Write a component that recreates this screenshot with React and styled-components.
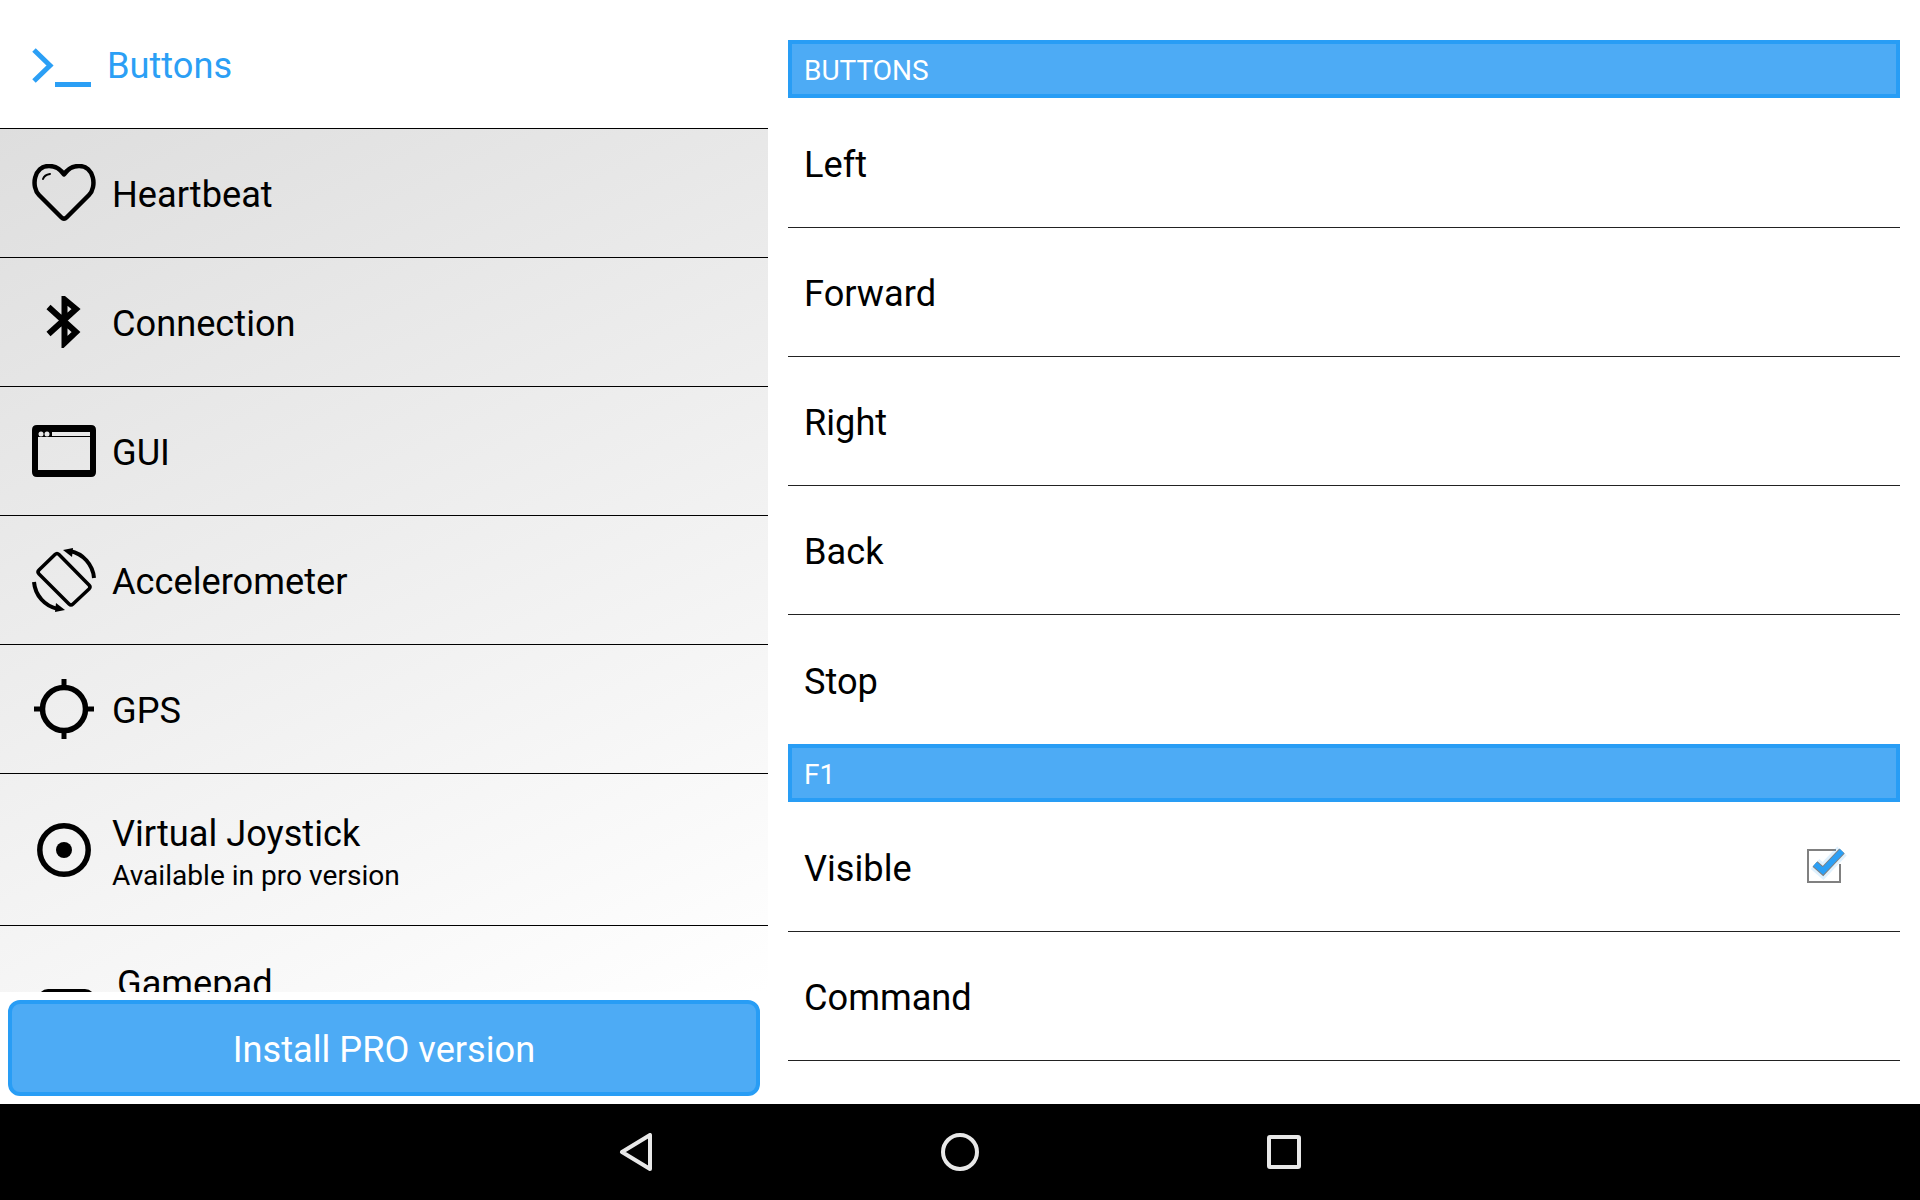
import React from "react";
import styled, { createGlobalStyle } from "styled-components";

const GlobalStyle = createGlobalStyle`
  html, body {
    margin: 0;
    padding: 0;
    background: #fff;
    font-family: Roboto, "Liberation Sans", sans-serif;
  }
`;

const Screen = styled.div`
  width: 1920px;
  height: 1200px;
  display: flex;
  flex-direction: column;
  overflow: hidden;
`;

const Content = styled.div`
  height: 1104px;
  display: flex;
`;

const Sidebar = styled.div`
  width: 768px;
  display: flex;
  flex-direction: column;
`;

const SideHeader = styled.div`
  height: 129px;
  box-sizing: border-box;
  display: flex;
  align-items: center;
  padding-left: 32px;
  border-bottom: 1px solid #000;
  flex-shrink: 0;
`;

const PromptSlot = styled.div`
  display: flex;
  margin-top: 8px;
`;

const SideTitle = styled.span`
  margin-left: 15px;
  padding-top: 3px;
  font-size: 36.2px;
  color: #2b9ff5;
`;

const MenuList = styled.div`
  height: 863px;
  overflow: hidden;
  flex-shrink: 0;
  background: linear-gradient(155deg, #dedede 0%, #ffffff 100%);
`;

const MenuItem = styled.div`
  height: ${(props) => (props.$tall ? "152px" : "129px")};
  box-sizing: border-box;
  display: flex;
  align-items: center;
  padding-left: 32px;
  border-bottom: 1px solid #000;
  color: #000;
`;

const IconSlot = styled.div`
  width: 64px;
  height: 64px;
  flex-shrink: 0;
  display: flex;
  align-items: center;
  justify-content: center;
`;

const MenuText = styled.div`
  margin-left: ${(props) => props.$indent || "16px"};
  padding: ${(props) => props.$pad || "4px 0 0"};
  display: flex;
  flex-direction: column;
`;

const MenuName = styled.span`
  font-size: 36.2px;
  line-height: 44px;
`;

const MenuHint = styled.span`
  font-size: 28.1px;
  line-height: 40px;
`;

const InstallArea = styled.div`
  flex: 1;
  display: flex;
  padding: 8px;
`;

const InstallButton = styled.button`
  width: 100%;
  height: 96px;
  box-sizing: border-box;
  background: #4dabf5;
  border: 4px solid #289df5;
  border-radius: 12px;
  color: #fff;
  font-family: inherit;
  font-size: 36.2px;
  padding: 3px 0 0;
`;

const Settings = styled.div`
  flex: 1;
  padding: 40px 20px 0;
  overflow: hidden;
`;

const CategoryBar = styled.div`
  height: 58px;
  box-sizing: border-box;
  background: #4dabf5;
  border: 4px solid #289df5;
  display: flex;
  align-items: center;
  padding: 2px 0 0 12px;
  color: #fff;
  font-size: 28px;
`;

const SettingRow = styled.div`
  height: ${(props) => (props.$first ? "130px" : "129px")};
  box-sizing: border-box;
  display: flex;
  align-items: center;
  justify-content: space-between;
  padding: 3px 50px 0 16px;
  border-bottom: ${(props) => (props.$last ? "none" : "1px solid #222")};
  font-size: 36.2px;
  color: #000;
`;

const NavBar = styled.div`
  height: 96px;
  background: #000;
  display: flex;
  align-items: center;
  justify-content: center;
  gap: 288px;
  flex-shrink: 0;
`;

const HeartIcon = () => (
  <svg width="64" height="58" viewBox="0 0 64 58" fill="none" stroke="#000" strokeWidth="4.5" strokeLinejoin="round" strokeLinecap="round">
    <path d="M29.5 53.5 L7 31 C-1 23 1.5 2 17 2 C24 2 29 6 32 10.5 C35 6 40 2 47 2 C62.5 2 65 23 57 31 L34.5 53.5 Q32 56 29.5 53.5 Z" />
    <path d="M11 15 C12 12 14.5 10.5 18 10" strokeWidth="2" />
  </svg>
);

const BluetoothIcon = () => (
  <svg width="36" height="52" viewBox="0 0 36 52" fill="none" stroke="#000" strokeWidth="6">
    <path d="M2.5 11 L30 36 L18.5 47 V3.5 L30 13 L2.5 38" />
  </svg>
);

const WindowIcon = () => (
  <svg width="64" height="52" viewBox="0 0 64 52">
    <path fillRule="evenodd" d="M5 0 H59 Q64 0 64 5 V47 Q64 52 59 52 H5 Q0 52 0 47 V5 Q0 0 5 0 Z M6 12 V45 H58 V12 Z" fill="#000" />
    <circle cx="9" cy="9" r="2.5" fill="#e8e8e8" />
    <circle cx="15" cy="9" r="2.5" fill="#e8e8e8" />
    <rect x="20" y="7" width="38" height="4" fill="#e8e8e8" />
  </svg>
);

const RotationIcon = () => (
  <svg width="64" height="64" viewBox="0 0 64 64" fill="none" stroke="#000" strokeWidth="3.5">
    <path d="M23 6.5 Q25 4.5 27 6.5 L57 37 Q59 39 57 41 L41 56 Q39 58 37 56 L7 26 Q5 24 7 22 Z" strokeLinejoin="round" />
    <path d="M38 3 A30 30 0 0 1 62 30" strokeWidth="4" />
    <path d="M2 34 A30 30 0 0 0 26 61" strokeWidth="4" />
    <path d="M31 2 L41 0 L40 9 Z" fill="#000" stroke="none" />
    <path d="M33 62 L23 64 L24 55 Z" fill="#000" stroke="none" />
  </svg>
);

const GpsIcon = () => (
  <svg width="60" height="60" viewBox="0 0 60 60" fill="none" stroke="#000">
    <circle cx="30" cy="30" r="21.5" strokeWidth="5.5" />
    <path d="M30 0 V8 M30 52 V60 M0 30 H8 M52 30 H60" strokeWidth="5" />
  </svg>
);

const TargetIcon = () => (
  <svg width="54" height="54" viewBox="0 0 54 54" fill="none">
    <circle cx="27" cy="27" r="24.2" stroke="#000" strokeWidth="5.5" />
    <circle cx="27" cy="27" r="8" fill="#000" />
  </svg>
);

const GamepadIcon = () => (
  <svg width="64" height="64" viewBox="0 0 64 64">
    <rect x="6" y="19" width="57" height="30" rx="10" fill="#000" />
  </svg>
);

const CheckIcon = () => (
  <svg width="44" height="44" viewBox="0 0 44 44" fill="none">
    <path d="M30 4 H2 V36 H34 V18" stroke="#808080" strokeWidth="2" />
    <path d="M9 18 L17 25 L36 5" stroke="#2b9ff5" strokeOpacity="0.15" strokeWidth="13" />
    <path d="M9 18 L17 25 L36 5" stroke="#808080" strokeWidth="7.5" />
    <path d="M9 18 L17 25 L36 5" stroke="#2b9ff5" strokeWidth="5.5" />
  </svg>
);

const BackIcon = () => (
  <svg width="34" height="38" viewBox="0 0 34 38" fill="none" stroke="#e8e8e8" strokeWidth="4" strokeLinejoin="round">
    <path d="M31 2 V36 L3 19 Z" />
  </svg>
);

const HomeIcon = () => (
  <svg width="38" height="38" viewBox="0 0 38 38" fill="none" stroke="#e8e8e8" strokeWidth="4">
    <circle cx="19" cy="19" r="17" />
  </svg>
);

const RecentIcon = () => (
  <svg width="34" height="34" viewBox="0 0 34 34" fill="none" stroke="#e8e8e8" strokeWidth="4" strokeLinejoin="round">
    <rect x="2" y="2" width="30" height="30" rx="1" />
  </svg>
);

const PromptIcon = () => (
  <svg width="60" height="40" viewBox="0 0 60 40" fill="none" stroke="#2b9ff5" strokeWidth="5">
    <path d="M2 2 L18 17.5 L2 33" />
    <path d="M23 36.5 H59" />
  </svg>
);

// Gamepad is the row cut off by the install area, only its first line shows
const menu = [
  { name: "Heartbeat", icon: <HeartIcon /> },
  { name: "Connection", icon: <BluetoothIcon /> },
  { name: "GUI", icon: <WindowIcon /> },
  { name: "Accelerometer", icon: <RotationIcon /> },
  { name: "GPS", icon: <GpsIcon /> },
  { name: "Virtual Joystick", hint: "Available in pro version", icon: <TargetIcon />, tall: true, pad: "8px 0 0" },
  { name: "Gamepad", icon: <GamepadIcon />, tall: true, indent: "21px", pad: "4px 0 40px" },
];

const firstGroup = ["Left", "Forward", "Right", "Back", "Stop"];

export default function App() {
  return (
    <>
      <GlobalStyle />
      <Screen>
        <Content>
          <Sidebar>
            <SideHeader>
              <PromptSlot>
                <PromptIcon />
              </PromptSlot>
              <SideTitle>Buttons</SideTitle>
            </SideHeader>
            <MenuList>
              {menu.map((item) => (
                <MenuItem key={item.name} $tall={item.tall}>
                  <IconSlot>{item.icon}</IconSlot>
                  <MenuText $indent={item.indent} $pad={item.pad}>
                    <MenuName>{item.name}</MenuName>
                    {item.hint && <MenuHint>{item.hint}</MenuHint>}
                  </MenuText>
                </MenuItem>
              ))}
            </MenuList>
            <InstallArea>
              <InstallButton>Install PRO version</InstallButton>
            </InstallArea>
          </Sidebar>
          <Settings>
            <CategoryBar>BUTTONS</CategoryBar>
            {firstGroup.map((label, i) => (
              <SettingRow key={label} $first={i === 0} $last={i === firstGroup.length - 1}>
                {label}
              </SettingRow>
            ))}
            <CategoryBar>F1</CategoryBar>
            <SettingRow $first>
              Visible
              <CheckIcon />
            </SettingRow>
            <SettingRow>Command</SettingRow>
          </Settings>
        </Content>
        <NavBar>
          <BackIcon />
          <HomeIcon />
          <RecentIcon />
        </NavBar>
      </Screen>
    </>
  );
}
